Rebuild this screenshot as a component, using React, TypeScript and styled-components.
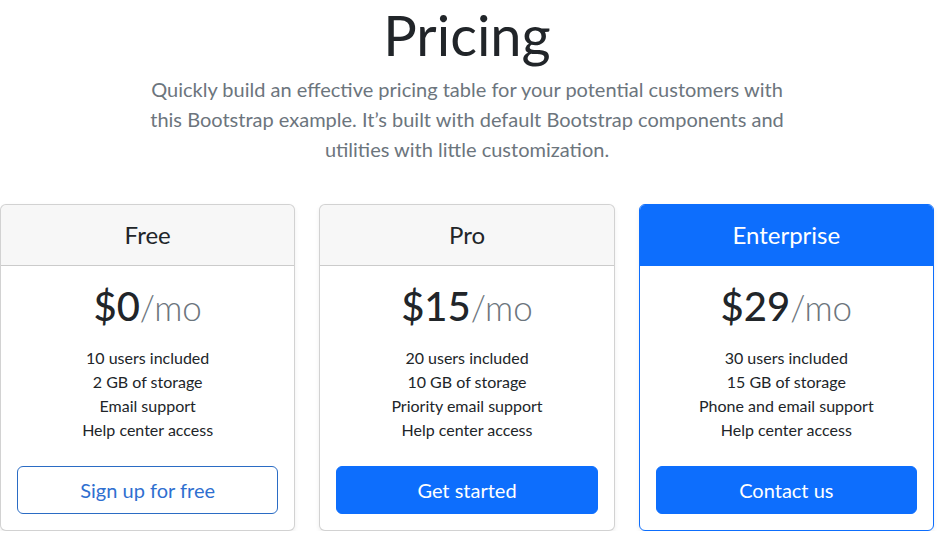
import React from "react";
import styled, { createGlobalStyle, css } from "styled-components";

const GlobalStyle = createGlobalStyle`
  html, body { margin: 0; padding: 0; background: #fff; }
  body {
    font-family: Lato, "Open Sans", sans-serif;
    color: #212529;
    -webkit-font-smoothing: antialiased;
  }
  * { box-sizing: border-box; }
`;

const Page = styled.main`
  width: 934px;
  display: flex;
  flex-direction: column;
  align-items: center;
`;

const Header = styled.header`
  display: flex;
  flex-direction: column;
  align-items: center;
  text-align: center;
  margin-bottom: 40px;
`;

const Title = styled.h1`
  margin: 1px 0 6px;
  font-size: 56px;
  font-weight: 400;
  line-height: 1.2;
  color: #212529;
`;

const Lead = styled.p`
  margin: 0;
  font-size: 20px;
  line-height: 30px;
  color: #6c757d;
`;

const CardRow = styled.section`
  width: 100%;
  display: grid;
  grid-template-columns: repeat(3, 1fr);
  gap: 24px;
`;

const Card = styled.article<{ $primary?: boolean }>`
  display: flex;
  flex-direction: column;
  border: 1px solid ${(p) => (p.$primary ? "#0d6efd" : "rgba(0,0,0,0.175)")};
  border-radius: 6px;
  box-shadow: 0 2px 4px rgba(0, 0, 0, 0.075);
  overflow: hidden;
  text-align: center;
  background: #fff;
`;

const CardHeader = styled.div<{ $primary?: boolean }>`
  padding: 16px;
  border-bottom: 1px solid ${(p) => (p.$primary ? "#0d6efd" : "rgba(0,0,0,0.175)")};
  background: ${(p) => (p.$primary ? "#0d6efd" : "rgba(0,0,0,0.03)")};
  color: ${(p) => (p.$primary ? "#fff" : "#212529")};
`;

const PlanName = styled.h4`
  margin: 0;
  font-size: 24px;
  font-weight: 400;
  line-height: 28px;
`;

const CardBody = styled.div`
  padding: 16px;
  display: flex;
  flex-direction: column;
`;

const Price = styled.h2`
  margin: 0 0 15px;
  font-size: 40px;
  font-weight: 500;
  line-height: 48px;
  color: #212529;
`;

const Per = styled.small`
  font-size: 35px;
  font-weight: 300;
  color: #6c757d;
`;

const Features = styled.ul`
  list-style: none;
  margin: 0 0 24px;
  padding: 0;
`;

const Feature = styled.li`
  font-size: 16px;
  line-height: 24px;
`;

const Button = styled.button<{ $outline?: boolean }>`
  width: 100%;
  height: 48px;
  padding: 8px 16px;
  font-family: inherit;
  font-size: 20px;
  line-height: 30px;
  border-radius: 6px;
  border: 1px solid ${(p) => (p.$outline ? "#2b6cc4" : "#0d6efd")};
  cursor: pointer;
  ${(p) =>
    p.$outline
      ? css`
          background: #fff;
          color: #2f6fd0;
        `
      : css`
          background: #0d6efd;
          color: #fff;
        `}
`;

type Plan = {
  name: string;
  price: string;
  features: string[];
  cta: string;
  outline?: boolean;
  primary?: boolean;
};

const plans: Plan[] = [
  {
    name: "Free",
    price: "$0",
    features: ["10 users included", "2 GB of storage", "Email support", "Help center access"],
    cta: "Sign up for free",
    outline: true,
  },
  {
    name: "Pro",
    price: "$15",
    features: ["20 users included", "10 GB of storage", "Priority email support", "Help center access"],
    cta: "Get started",
  },
  {
    name: "Enterprise",
    price: "$29",
    features: ["30 users included", "15 GB of storage", "Phone and email support", "Help center access"],
    cta: "Contact us",
    primary: true,
  },
];

export default function App() {
  return (
    <>
      <GlobalStyle />
      <Page>
        <Header>
          <Title>Pricing</Title>
          <Lead>
            Quickly build an effective pricing table for your potential customers with
            <br />
            this Bootstrap example. It’s built with default Bootstrap components and
            <br />
            utilities with little customization.
          </Lead>
        </Header>
        <CardRow>
          {plans.map((p) => (
            <Card key={p.name} $primary={p.primary}>
              <CardHeader $primary={p.primary}>
                <PlanName>{p.name}</PlanName>
              </CardHeader>
              <CardBody>
                <Price>
                  {p.price}
                  <Per>/mo</Per>
                </Price>
                <Features>
                  {p.features.map((f) => (
                    <Feature key={f}>{f}</Feature>
                  ))}
                </Features>
                <Button $outline={p.outline}>{p.cta}</Button>
              </CardBody>
            </Card>
          ))}
        </CardRow>
      </Page>
    </>
  );
}
